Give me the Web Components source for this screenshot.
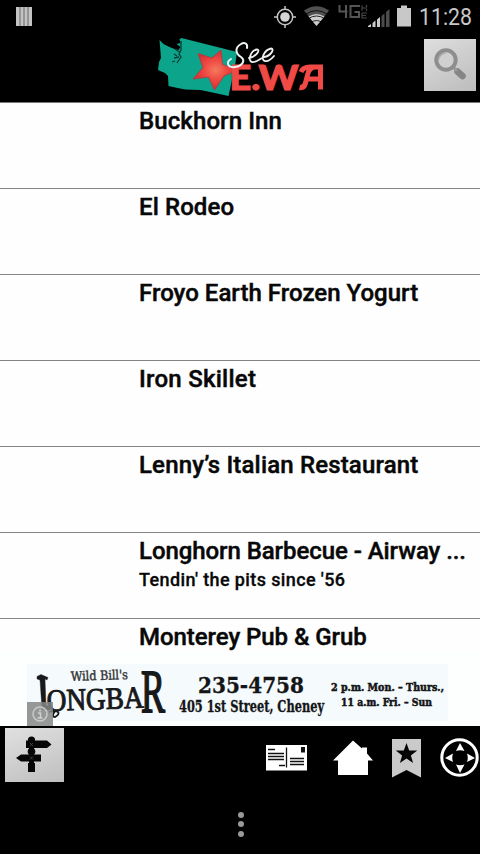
<!DOCTYPE html>
<html lang="en">
<head>
<meta charset="utf-8">
<title>See E.WA</title>
<style>
html,body{margin:0;padding:0;background:#000}
body{width:480px;height:854px;overflow:hidden;font-family:Roboto,"Liberation Sans",sans-serif}
</style>
</head>
<body>
<guide-app></guide-app>
<script>
const define=(name,html)=>customElements.define(name,class extends HTMLElement{
  constructor(){super();this.attachShadow({mode:'open'}).innerHTML=html;}
});

define('status-bar',`<style>
:host{display:block;height:34px;background:#000}svg{display:block}
</style>
<svg width="480" height="34" viewBox="0 0 480 34">
<rect x="16" y="7" width="16" height="19" fill="#c4c4c4"/>
<path d="M20 7v19M24 7v19M28 7v19" stroke="#666" stroke-width="1"/>
<g fill="none" stroke="#c4c4c4" stroke-width="1.5"><circle cx="285" cy="17" r="7.7"/><path d="M285 6v4M285 24v4M274 17h4M292 17h4"/></g>
<circle cx="285" cy="17" r="4.8" fill="#d4d4d4"/>
<path d="M304 10.500Q316.500 2 329 10.500L316.500 26Z" fill="#505050"/>
<path d="M308.500 16.500Q316.500 11.500 324.500 16.500L316.500 26Z" fill="#ccc"/>
<g fill="none" stroke="#000" stroke-width=".8"><path d="M305 14.700Q316.500 6.500 328 14.700M308 18.800Q316.500 13.200 325 18.800M311 22.300Q316.500 18.800 322 22.300"/></g>
<g fill="none" stroke="#555" stroke-width="2"><path d="M339.500 5v6.500h8M346 5v13M360 6h-9.500v11h8.500v-5h-4.500"/></g>
<path d="M362 5.500v5M362 8h5M366.500 5v2M366.500 9v2M362 13h5M362 13v5h5M362 15.500h4" stroke="#484848" stroke-width="1.2" fill="none"/>
<g fill="#ccc"><path d="M368 27v-1l3-2v3zM372.500 27v-4l3-2.500v6.500zM377 27v-7.500l3-2.500v10z"/></g>
<g fill="#4c4c4c"><path d="M381.500 27v-11l3-2.500v13.500zM386 27v-15l3.500-3v18z"/></g>
<path d="M397 8h4v-2.500h6V8h4v18.500h-14z" fill="#c8c8c8"/>
<text x="419" y="25" font-family="Roboto,sans-serif" font-size="23" fill="#c8c8c8" textLength="53" lengthAdjust="spacingAndGlyphs">11:28</text>
</svg>`);

define('app-header',`<style>
:host{display:flex;justify-content:space-between;background:#000;border-bottom:1px solid #777;box-sizing:border-box;height:69px}
.logo{display:block;margin-left:150px}
.search{width:52px;height:52px;margin:5px 4px 0 0;background:linear-gradient(150deg,#dedede,#bcbcbc);border:0;padding:0}
.search svg{display:block}
</style>
<svg class="logo" width="180" height="66" viewBox="0 0 180 66">
<defs><radialGradient id="g"><stop offset="0" stop-color="#f57a60"/><stop offset=".5" stop-color="#ee4942"/><stop offset="1" stop-color="#d52e35"/></radialGradient></defs>
<path d="M9.500 6l4 4 6 3 5 2 4 1 2-3-4-3 4-1-1-4 2-1L87 18l-2 14-6.500 30-9-2-19-4-15-.5-8-1.500-9-2-.500-10-3-3-7-3 1-8 2-4z" fill="#0da48c"/>
<path d="M31 7v9l-2 4 2 3-4 6m-2-14 3 2 2 1m-1 5-5 1m-2 4 3-1m2-5-3-2" fill="none" stroke="#063a33" stroke-width="1.300"/>
<path d="M71 16l1.500 14.500L88 36l-14 6-9.500 14-6-13-15.500 2 10-11.500-5-14 14 4.500z" fill="url(#g)" stroke="#b7333a" stroke-width=".8"/>
<text x="79.500" y="55.500" font-family="Lato,sans-serif" font-weight="900" font-size="34" fill="#f04a47" stroke="#f04a47" stroke-width="1" textLength="69" lengthAdjust="spacingAndGlyphs">E.W</text>
<path d="M149.500 53.500Q154 54.500 155.500 49L157.500 41Q159 33 166 33H170.500V55.500M156 45H170M151 38Q153 33 160 33H168" fill="none" stroke="#f04a47" stroke-width="5"/>
<path d="M97 14C98 9 94 8 91 10C84 14 86 20 91 23C96 27 92 32 85 33C77 34 76 28 81 25" fill="none" stroke="#edf5f4" stroke-width="2" stroke-linecap="round"/>
<path d="M99 24C106 23 111 15.500 107 15.500C101 16 97 27 102 28C106 29 111 24 114 23C121 22 125 14.500 121 14.500C114 16 110 26 115 27Q119 28 124 22" fill="none" stroke="#f0f0f0" stroke-width="1.800" stroke-linecap="round"/>
</svg>
<button class="search" aria-label="Search"><svg width="52" height="52" viewBox="0 0 52 52"><path d="M33.500 32.500l5 4.500" stroke="#858585" stroke-width="6.500" stroke-linecap="round"/><path d="M28 27l5 5" stroke="#999" stroke-width="3"/><circle cx="22" cy="21" r="9.700" fill="#d0d0d0" stroke="#8e8e8e" stroke-width="4"/><path d="M14.500 21a7.500 7.500 0 0 1 7-7" fill="none" stroke="#aaa" stroke-width="1.500"/></svg></button>`);

define('place-row',`<style>
:host{display:block;box-sizing:border-box;height:86px;flex:none;padding:4px 0 0 139px;border-bottom:1px solid #848484;color:#080808;white-space:nowrap}
.t{font:500 24px/28px Roboto,sans-serif;letter-spacing:var(--track,.1px);-webkit-text-stroke:.45px #080808}
.s{font:500 18px/22px Roboto,sans-serif;margin-top:4px;letter-spacing:.38px;-webkit-text-stroke:.3px #080808}
</style><div class="t"><slot></slot></div><div class="s"><slot name="note"></slot></div>`);

define('place-list',`<style>:host{display:flex;flex-direction:column;height:549px;overflow:hidden;background:#fefefe}</style><slot></slot>`);

define('ad-banner',`<style>:host{display:block;height:74px;background:#fdfefe}svg{display:block}</style>
<svg width="480" height="74" viewBox="0 0 480 74">
<rect x="27" y="12" width="421" height="57" fill="#f5fafd"/>
<text transform="translate(71 29) rotate(-2)" font-family="DejaVu Serif Condensed,DejaVu Serif,serif" font-size="13" fill="#333" stroke="#333" stroke-width=".4" textLength="57" lengthAdjust="spacingAndGlyphs">Wild Bill's</text>
<g fill="#18191b" stroke="#18191b" font-family="Liberation Serif,serif">
<path d="M37 24.500l4-2 7 3-1 2.500-2-1 1 27 4-1v5l-8-1-2-29-3-1z" stroke-width=".4"/>
<text transform="translate(47 59) rotate(-2)" font-size="31" stroke-width="1" textLength="97" lengthAdjust="spacingAndGlyphs">ONGBA</text>
<text transform="translate(141 60) scale(.58 1)" font-size="62" stroke-width="1.800">R</text>
<path d="M49 60q7-2 9 0t-3 5q-4 0 0-6" fill="none" stroke-width="1.800"/>
</g>
<g font-family="DejaVu Serif Condensed,DejaVu Serif,serif" font-weight="bold" fill="#141516" stroke="#141516" stroke-width=".3">
<text x="198" y="41" font-size="23" textLength="106" lengthAdjust="spacingAndGlyphs">235-4758</text>
<text x="179" y="59.500" font-size="16" textLength="145" lengthAdjust="spacingAndGlyphs">405 1st Street, Cheney</text>
<text x="331" y="39" font-size="11" stroke-width=".5" textLength="113" lengthAdjust="spacingAndGlyphs">2 p.m. Mon. – Thurs.,</text>
<text x="341" y="53.500" font-size="11" stroke-width=".5" textLength="91" lengthAdjust="spacingAndGlyphs">11 a.m. Fri. – Sun</text>
</g>
<rect x="27" y="50" width="26" height="24" fill="#858686" fill-opacity=".85"/>
<circle cx="40" cy="62" r="7" fill="none" stroke="#c9c9c9" stroke-width="1.500"/><path d="M38 61h2.500v5M37.500 66h5M40 57.500v2" stroke="#d0d0d0" stroke-width="1.500" fill="none"/>
</svg>`);

define('tool-bar',`<style>
:host{display:flex;height:60px;background:#000;justify-content:space-between}
button{border:0;padding:0;width:59px;height:54px;margin:2px 0 0 5px;background:linear-gradient(160deg,#e0e0e0,#bfbfbf)}
svg{display:block}
</style>
<button aria-label="Directions"><svg width="59" height="54" viewBox="0 0 59 54"><g fill="#060606"><circle cx="26.500" cy="12" r="3.600"/><rect x="24" y="10" width="5" height="34"/><path d="M21 12.500h21l4.500 4-4.500 3.500H21z"/><path d="M36 26.500H16l-5 3.500 5 3.500h20z"/><rect x="23" y="35" width="7" height="9"/><circle cx="26.500" cy="23.500" r="3.800"/></g><path d="M25 15l3 3m0-3l-3 3M25 28.500l3 3m0-3l-3 3" stroke="#555" stroke-width=".7"/></svg></button>
<svg width="240" height="60" viewBox="240 726 240 60">
<rect x="266" y="745" width="41" height="25.500" fill="#fff"/>
<path d="M268 749.500h7M268 753.500h16M268 756.500h16M268 759.500h16M279 765.500h6M290 758.500h14M290 761.500h14M290 764.500h14" stroke="#111" stroke-width="1.300"/><path d="M286.500 747.500v20" stroke="#111" stroke-width="1.300"/><rect x="301" y="747" width="4" height="5.500" fill="#111"/>
<path d="M353 740.500l9 8v-1h5v6l6 7h-5V775h-30v-14.500h-5z" fill="#fff"/>
<path d="M392 739h29v38.500l-14.500-7.500-14.500 7.500z" fill="#cacaca"/>
<path d="M406.500 743l2.700 7.500h8l-6.300 5 2.200 7.500-6.600-4.500-6.600 4.500 2.200-7.500-6.300-5h8z" fill="#050505"/>
<circle cx="459.500" cy="757.500" r="17.700" fill="#000" stroke="#fff" stroke-width="3"/>
<path d="M460 743l4.500 8q-4.500-1.500-8.500 0zM460 773l4.500-8.500q-4.500 1.500-8.500 0zM445 758l8-4.500q-1.500 4.500 0 8.500zM475 758l-8-4.500q1.500 4.500 0 8.500z" fill="#fff"/>
</svg>`);

define('nav-bar',`<style>
:host{display:flex;flex-direction:column;align-items:center;gap:3.400px;height:68px;box-sizing:border-box;padding-top:26px;padding-left:1px;background:#000}
i{display:block;width:6px;height:6px;border-radius:50%;background:#999}
</style><i></i><i></i><i></i>`);

define('guide-app',`<style>:host{display:flex;flex-direction:column;width:480px;height:854px;overflow:hidden;background:#000}</style>
<status-bar></status-bar>
<app-header></app-header>
<place-list>
<place-row>Buckhorn Inn</place-row>
<place-row>El Rodeo</place-row>
<place-row style="--track:.02px">Froyo Earth Frozen Yogurt</place-row>
<place-row style="--track:.25px">Iron Skillet</place-row>
<place-row style="--track:.16px">Lenny’s Italian Restaurant</place-row>
<place-row style="--track:-.07px">Longhorn Barbecue - Airway ...<span slot="note">Tendin' the pits since '56</span></place-row>
<place-row style="--track:-.05px">Monterey Pub &amp; Grub</place-row>
</place-list>
<ad-banner></ad-banner>
<tool-bar></tool-bar>
<nav-bar></nav-bar>`);
</script>
</body>
</html>
